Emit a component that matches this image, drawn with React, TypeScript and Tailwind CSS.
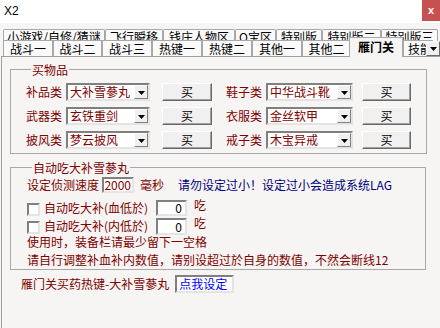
import React from 'react';

const sunken =
  'border-2 border-t-[#808080] border-l-[#808080] border-b-[#e4e4e4] border-r-[#e4e4e4] bg-white';

function Arrow() {
  return (
    <svg width="7" height="4" viewBox="0 0 7 4">
      <path d="M0 0h7L3.5 4z" fill="#000" />
    </svg>
  );
}

function Combo({ value, width }: { value: string; width: string }) {
  return (
    <div className={`flex h-[18px] ${width} ${sunken}`}>
      <span className="flex-1 pl-[2px] text-[12px] leading-[14px] text-[#800000] whitespace-nowrap">
        {value}
      </span>
      <span className="flex h-[14px] w-[14px] items-center justify-center border border-t-white border-l-white border-r-[#808080] border-b-[#808080] bg-[#f0f0f0] pt-[2px]">
        <Arrow />
      </span>
    </div>
  );
}

function BuyButton({ width }: { width: string }) {
  return (
    <div
      className={`flex h-[18px] ${width} items-center justify-center border border-t-white border-l-white border-r-[#6a6a6a] border-b-[#6a6a6a] bg-[#f0f0f0] shadow-[inset_-1px_-1px_0_#a0a0a0] text-[12px] leading-[14px] text-black`}
    >
      买
    </div>
  );
}

function ItemRow({ label, value, comboW, gap, btnW }: { label: string; value: string; comboW: string; gap: string; btnW: string }) {
  return (
    <div className="flex items-center h-[18px]">
      <span className="w-[40px] text-[12px] leading-[14px] text-[#800000]">{label}</span>
      <Combo value={value} width={comboW} />
      <div className={gap} />
      <BuyButton width={btnW} />
    </div>
  );
}

const backTabs: [string, string][] = [
  ['小游戏/自修/猜谜', 'w-[102px]'],
  ['飞行瞬移', 'w-[58px]'],
  ['钱庄人物区', 'w-[72px]'],
  ['Q宝区', 'w-[41px]'],
  ['特别版', 'w-[46px]'],
  ['特别版二', 'w-[59px]'],
  ['特别版三', 'w-[57px]'],
];

const frontTabs: [string, string][] = [
  ['战斗一', 'w-[50px]'],
  ['战斗二', 'w-[49px]'],
  ['战斗三', 'w-[50px]'],
  ['热键一', 'w-[50px]'],
  ['热键二', 'w-[50px]'],
  ['其他一', 'w-[50px]'],
  ['其他二', 'w-[49px]'],
];

export default function App() {
  return (
    <div className="w-[440px] h-[328px] overflow-hidden flex flex-col bg-[#f6f5f3] font-['Noto_Sans_CJK_SC',sans-serif] text-[12px]">
      {/* title bar */}
      <div className="h-[23px] shrink-0 flex justify-between bg-white">
        <span className="pl-[4px] pt-[4px] font-['Liberation_Sans',sans-serif] text-[12px] leading-[14px] text-black">X2</span>
        <div className="w-[18px] h-[21px] flex items-center justify-center bg-[#c75050] text-white font-['Liberation_Sans',sans-serif] text-[11px] font-bold leading-none">
          x
        </div>
      </div>

      {/* tabs */}
      <div className="relative mt-[6px] shrink-0">
        <div className="flex pl-[3px] h-[16px]">
          {backTabs.map(([t, w]) => (
            <div
              key={t}
              className={`${w} h-[16px] border border-b-0 border-[#a8a8a8] rounded-t-[2px] bg-[#fafafa] text-center leading-[13px] text-black whitespace-nowrap overflow-hidden`}
            >
              {t}
            </div>
          ))}
        </div>
        <div className="relative z-10 -mt-[5px] flex items-end pl-[3px] h-[16px]">
          {frontTabs.map(([t, w]) => (
            <div
              key={t}
              className={`${w} h-[16px] border border-b-0 border-[#a8a8a8] bg-[#fafafa] text-center leading-[15px] text-black`}
            >
              {t}
            </div>
          ))}
          <div className="w-[54px] -ml-[2px] h-[20px] -mb-[1px] border border-b-0 border-[#a8a8a8] bg-[#f6f5f3] text-center font-bold leading-[18px] text-black">
            雁门关
          </div>
          <div className="w-[30px] h-[16px] border border-b-0 border-[#a8a8a8] bg-[#fafafa] pl-[4px] leading-[15px] text-black whitespace-nowrap overflow-hidden">
            技能
          </div>
          <div className="absolute right-0 bottom-0 w-[14px] h-[15px] flex items-center justify-center border border-t-white border-l-white border-r-[#6a6a6a] border-b-[#6a6a6a] bg-[#f0f0f0]">
            <Arrow />
          </div>
        </div>
      </div>

      {/* panel */}
      <div className="flex-1 ml-[1px] border-l border-t border-[#a0a0a0] pl-[8px]">
        <fieldset className="mt-[5px] w-[417px] border border-[#a8a8a8] pl-[15px] pb-[4px] pt-[6px]">
          <legend className="ml-[5px] px-[1px] leading-[15px] text-[#800000]">买物品</legend>
          <div className="flex flex-col gap-[6px]">
            <div className="flex">
              <ItemRow label="补品类" value="大补雪蔘丸" comboW="w-[84px]" gap="w-[12px]" btnW="w-[50px]" />
              <div className="w-[14px]" />
              <ItemRow label="鞋子类" value="中华战斗靴" comboW="w-[87px]" gap="w-[9px]" btnW="w-[49px]" />
            </div>
            <div className="flex">
              <ItemRow label="武器类" value="玄铁重剑" comboW="w-[84px]" gap="w-[12px]" btnW="w-[50px]" />
              <div className="w-[14px]" />
              <ItemRow label="衣服类" value="金丝软甲" comboW="w-[87px]" gap="w-[9px]" btnW="w-[49px]" />
            </div>
            <div className="flex">
              <ItemRow label="披风类" value="梦云披风" comboW="w-[84px]" gap="w-[12px]" btnW="w-[50px]" />
              <div className="w-[14px]" />
              <ItemRow label="戒子类" value="木宝异戒" comboW="w-[87px]" gap="w-[9px]" btnW="w-[49px]" />
            </div>
          </div>
        </fieldset>

        <fieldset className="mt-[6px] w-[416px] border border-[#a8a8a8] pl-[16px] pb-[1px] pt-[2px]">
          <legend className="ml-[5px] px-[1px] leading-[15px] text-[#800000]">自动吃大补雪蔘丸</legend>
          <div className="flex items-center h-[16px]">
            <span className="text-[#800000] leading-[14px]">设定侦测速度</span>
            <div className={`ml-[3px] w-[32px] h-[16px] ${sunken} text-right pr-[1px] leading-[12px] text-[#800000]`}>2000</div>
            <span className="ml-[6px] text-[#800000] leading-[14px]">毫秒</span>
            <span className="ml-[14px] text-[#000080] leading-[14px] whitespace-nowrap">请勿设定过小！设定过小会造成系统LAG</span>
          </div>

          <div className="mt-[7px] flex items-start h-[16px]">
            <div className={`mt-[3px] w-[13px] h-[13px] ${sunken}`} />
            <span className="ml-[4px] mt-[1px] w-[112px] text-[#800000] leading-[14px]">自动吃大补(血低於)</span>
            <div className={`w-[31px] h-[16px] ${sunken} text-right pr-[3px] leading-[12px] text-black`}>0</div>
            <span className="ml-[7px] -mt-[2px] text-[#800000] leading-[14px]">吃</span>
          </div>

          <div className="mt-[2px] flex items-start h-[17px]">
            <div className={`mt-[3px] w-[13px] h-[13px] ${sunken}`} />
            <span className="ml-[4px] mt-[1px] w-[112px] text-[#800000] leading-[14px]">自动吃大补(内低於)</span>
            <div className={`w-[31px] h-[17px] ${sunken} text-right pr-[3px] leading-[13px] text-black`}>0</div>
            <span className="ml-[7px] -mt-[2px] text-[#800000] leading-[14px]">吃</span>
          </div>

          <div className="-mt-[2px] text-[#800000] leading-[18px]">使用时，装备栏请最少留下一空格</div>
          <div className="text-[#800000] leading-[17px] whitespace-nowrap">请自行调整补血补内数值，请别设超过於自身的数值，不然会断线12</div>
        </fieldset>

        <div className="mt-[5px] ml-[11px] flex items-center h-[18px]">
          <span className="text-[#800000] leading-[14px]">雁门关买药热键-大补雪蔘丸</span>
          <div className={`ml-[6px] w-[59px] h-[18px] ${sunken} pl-[2px] leading-[14px] text-[#0000ff]`}>点我设定</div>
        </div>
      </div>
    </div>
  );
}
